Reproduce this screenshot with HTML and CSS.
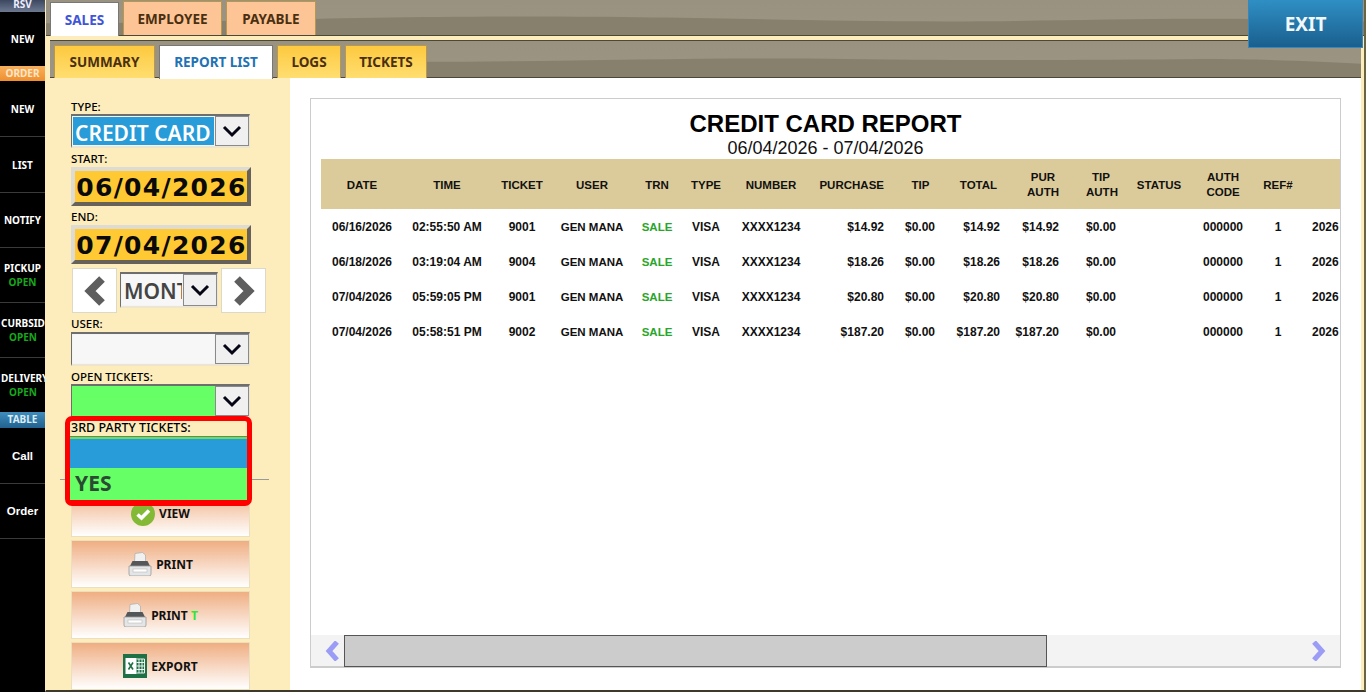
FILE: index.html
```html
<!DOCTYPE html>
<html lang="en">
<head>
    <meta charset="UTF-8">
    <meta name="viewport" content="width=device-width, initial-scale=1.0">
    <title>Credit Card Report</title>
    <link rel="stylesheet" href="styles.css">
</head>
<body>
    <nav class="side">
        <div class="side-head head-rsv">RSV</div>
        <div class="side-item side-short">NEW</div>
        <div class="side-head head-order">ORDER</div>
        <div class="side-item side-tall">NEW</div>
        <div class="side-item side-tall">LIST</div>
        <div class="side-item">NOTIFY</div>
        <div class="side-item">PICKUP<span class="side-open">OPEN</span></div>
        <div class="side-item side-clip">CURBSIDE<span class="side-open">OPEN</span></div>
        <div class="side-item side-clip side-last">DELIVERY<span class="side-open">OPEN</span></div>
        <div class="side-head head-table">TABLE</div>
        <div class="side-item side-plain">Call</div>
        <div class="side-item side-plain">Order</div>
    </nav>

    <div class="main">
        <div class="strip strip-top">
            <svg class="wave" viewBox="0 0 1320 36" preserveAspectRatio="none"><path d="M0 24 C150 24 280 17 480 17 C650 17 760 22 900 22 C1040 22 1130 16 1320 22 V36 H0 Z"/></svg>
            <a class="tab tab-peach tab-on tab-sales">SALES</a>
            <a class="tab tab-peach tab-employee">EMPLOYEE</a>
            <a class="tab tab-peach tab-payable">PAYABLE</a>
        </div>
        <a class="exit">EXIT</a>

        <div class="strip strip-sub">
            <svg class="wave" viewBox="0 0 1320 38" preserveAspectRatio="none"><path d="M370 22 C520 22 650 17 800 19 C950 21 1050 20 1160 19 C1230 19 1280 22 1320 24 V38 H370 Z"/></svg>
            <a class="tab tab-yellow tab-summary">SUMMARY</a>
            <a class="tab tab-yellow tab-on tab-report">REPORT LIST</a>
            <a class="tab tab-yellow tab-logs">LOGS</a>
            <a class="tab tab-yellow tab-tickets">TICKETS</a>
        </div>

        <div class="content">
            <aside class="filters">
                <label class="lbl">TYPE:</label>
                <div class="combo">
                    <div class="combo-value value-blue">CREDIT CARD</div>
                    <div class="combo-arrow"><svg viewBox="0 0 20 14"><path d="M2 3 L10 11 L18 3"/></svg></div>
                </div>
                <label class="lbl lbl-tall">START:</label>
                <div class="date">06/04/2026</div>
                <label class="lbl lbl-tall">END:</label>
                <div class="date">07/04/2026</div>

                <div class="range">
                    <button class="range-btn"><svg viewBox="0 0 26 34"><path d="M20 5 L8 17 L20 29"/></svg></button>
                    <div class="combo combo-range">
                        <div class="combo-value value-gray">MONTH</div>
                        <div class="combo-arrow"><svg viewBox="0 0 20 14"><path d="M2 3 L10 11 L18 3"/></svg></div>
                    </div>
                    <button class="range-btn"><svg viewBox="0 0 26 34"><path d="M6 5 L18 17 L6 29"/></svg></button>
                </div>

                <label class="lbl lbl-tall">USER:</label>
                <div class="combo">
                    <div class="combo-value"></div>
                    <div class="combo-arrow"><svg viewBox="0 0 20 14"><path d="M2 3 L10 11 L18 3"/></svg></div>
                </div>
                <label class="lbl lbl-gap">OPEN TICKETS:</label>
                <div class="combo">
                    <div class="combo-value value-green"></div>
                    <div class="combo-arrow"><svg viewBox="0 0 20 14"><path d="M2 3 L10 11 L18 3"/></svg></div>
                </div>

                <div class="spacer"></div>
                <hr class="rule">

                <div class="actions">
                    <button class="act act-view">
                        <svg class="act-icon" viewBox="0 0 24 24"><circle cx="12" cy="12" r="12" fill="#84b935"/><path d="M6.5 12.5 L10.5 16 L18 8.5" fill="none" stroke="#fff" stroke-width="3.6"/></svg>
                        VIEW
                    </button>
                    <button class="act">
                        <svg class="act-icon" viewBox="0 0 24 24"><use href="#printer"/></svg>
                        PRINT
                    </button>
                    <button class="act">
                        <svg class="act-icon" viewBox="0 0 24 24"><use href="#printer"/></svg>
                        <span>PRINT <em class="act-t">T</em></span>
                    </button>
                    <button class="act">
                        <svg class="act-icon" viewBox="0 0 24 24">
                            <rect width="24" height="24" fill="#1e7145"/>
                            <rect x="2.5" y="4" width="11" height="16" fill="#fff"/>
                            <path d="M5.5 8.5 L10 15.5 M10 8.5 L5.5 15.5" stroke="#1e7145" stroke-width="1.6"/>
                            <path d="M13.5 5 H21.5 V19 H13.5 M16 5 V19 M19 5 V19 M13.5 8.5 H21.5 M13.5 12 H21.5 M13.5 15.5 H21.5" fill="none" stroke="#fff" stroke-width=".9"/>
                        </svg>
                        EXPORT
                    </button>
                </div>
            </aside>

            <section class="report">
                <h2 class="report-title">CREDIT CARD REPORT</h2>
                <p class="report-range">06/04/2026 - 07/04/2026</p>
                <div class="report-table">
                    <table>
                        <colgroup>
                            <col class="c-date"><col class="c-time"><col class="c-ticket"><col class="c-user"><col class="c-trn"><col class="c-type"><col class="c-number"><col class="c-purchase"><col class="c-tip"><col class="c-total"><col class="c-purauth"><col class="c-tipauth"><col class="c-status"><col class="c-code"><col class="c-ref"><col class="c-batch">
                        </colgroup>
                        <thead>
                            <tr>
                                <th>DATE</th><th>TIME</th><th>TICKET</th><th>USER</th><th>TRN</th><th>TYPE</th><th>NUMBER</th>
                                <th class="num">PURCHASE</th><th class="mid">TIP</th><th class="mid">TOTAL</th><th class="mid mid-auth">PUR<br>AUTH</th><th class="mid mid-auth">TIP<br>AUTH</th>
                                <th>STATUS</th><th>AUTH<br>CODE</th><th>REF#</th><th></th>
                            </tr>
                        </thead>
                        <tbody>
                            <tr><td>06/16/2026</td><td>02:55:50 AM</td><td>9001</td><td class="narrow">GEN MANA</td><td class="sale">SALE</td><td>VISA</td><td>XXXX1234</td><td class="num">$14.92</td><td class="num">$0.00</td><td class="num">$14.92</td><td class="num">$14.92</td><td class="num">$0.00</td><td></td><td>000000</td><td>1</td><td class="batch">2026</td></tr>
                            <tr><td>06/18/2026</td><td>03:19:04 AM</td><td>9004</td><td class="narrow">GEN MANA</td><td class="sale">SALE</td><td>VISA</td><td>XXXX1234</td><td class="num">$18.26</td><td class="num">$0.00</td><td class="num">$18.26</td><td class="num">$18.26</td><td class="num">$0.00</td><td></td><td>000000</td><td>1</td><td class="batch">2026</td></tr>
                            <tr><td>07/04/2026</td><td>05:59:05 PM</td><td>9001</td><td class="narrow">GEN MANA</td><td class="sale">SALE</td><td>VISA</td><td>XXXX1234</td><td class="num">$20.80</td><td class="num">$0.00</td><td class="num">$20.80</td><td class="num">$20.80</td><td class="num">$0.00</td><td></td><td>000000</td><td>1</td><td class="batch">2026</td></tr>
                            <tr><td>07/04/2026</td><td>05:58:51 PM</td><td>9002</td><td class="narrow">GEN MANA</td><td class="sale">SALE</td><td>VISA</td><td>XXXX1234</td><td class="num">$187.20</td><td class="num">$0.00</td><td class="num">$187.20</td><td class="num">$187.20</td><td class="num">$0.00</td><td></td><td>000000</td><td>1</td><td class="batch">2026</td></tr>
                        </tbody>
                    </table>
                </div>
                <div class="hscroll">
                    <div class="hscroll-end"><svg viewBox="0 0 17 20"><path d="M14 1 L6 10 L14 19"/></svg></div>
                    <div class="hscroll-thumb"></div>
                    <div class="hscroll-rest"><svg viewBox="0 0 17 20"><path d="M3 1 L11 10 L3 19"/></svg></div>
                </div>
            </section>
        </div>

        <!-- highlighted dropdown, open over the filters -->
        <div class="callout">
            <div class="callout-label">3RD PARTY TICKETS:</div>
            <div class="callout-opt opt-blue"></div>
            <div class="callout-opt opt-green">YES</div>
        </div>
    </div>

    <svg class="defs" width="0" height="0">
        <symbol id="printer" viewBox="0 0 24 24">
            <path d="M6.5 10 L7 1.5 L14.5 0.5 L17.5 3 V10 Z" fill="#f1f1f1" stroke="#aaa" stroke-width=".7"/>
            <path d="M4.5 9 H19.5 L22 14 H2 Z" fill="#54575a"/>
            <path d="M1 14 H23 V22 Q23 24 21 24 H3 Q1 24 1 22 Z" fill="#e3e5e6" stroke="#999" stroke-width=".8"/>
            <rect x="5" y="17" width="14" height="3" fill="#fff" stroke="#bbb" stroke-width=".6"/>
        </symbol>
    </svg>
</body>
</html>
```

FILE: styles.css
```css
* {
    margin: 0;
    padding: 0;
    box-sizing: border-box;
}
html, body {
    height: 692px;
    overflow: hidden;
}
body {
    display: flex;
    background: #000;
    font-family: 'Noto Sans', sans-serif;
    color: #111;
}
.defs {
    position: absolute;
}

/* left black bar */
.side {
    width: 45px;
    flex: 0 0 45px;
    background: #000;
    color: #fff;
    font-size: 10px;
    font-weight: 700;
    overflow: hidden;
}
.side-head {
    height: 16px;
    line-height: 15px;
    text-align: center;
    color: #eef;
}
.head-rsv {
    height: 12px;
    line-height: 9px;
    background: linear-gradient(#3c4760, #6d7891);
}
.head-order {
    height: 15px;
    background: linear-gradient(#f8b05c, #ef8f2e);
    color: #fde6c8;
}
.head-table {
    margin-bottom: 1px;
    background: linear-gradient(#3f8dbd, #21618f);
    color: #dcecf6;
}
.side-item {
    height: 55px;
    border-bottom: 1px solid #3a3a3a;
    display: flex;
    flex-direction: column;
    align-items: center;
    justify-content: center;
    line-height: 14px;
    white-space: nowrap;
    overflow: hidden;
}
.side-short {
    height: 54px;
    border-bottom: none;
}
.side-tall {
    height: 56px;
}
.side-last {
    height: 54px;
    border-bottom: none;
}
.side-clip {
    align-items: flex-start;
    padding-left: 1px;
}
.side-clip .side-open {
    align-self: center;
}
.side-plain {
    font-family: 'Liberation Sans', sans-serif;
    font-size: 11.5px;
}
.side-open {
    color: #17a81c;
}

/* main area */
.main {
    flex: 1;
    position: relative;
    background: #fdedbd;
    border-left: 1px solid #fdedbd;
    border-right: 2px solid #6b6440;
    border-bottom: 2px solid #3d3a2c;
    display: flex;
    flex-direction: column;
}
.strip {
    position: relative;
    display: flex;
    align-items: flex-end;
    background: linear-gradient(#9a9281, #9c9583);
    border-bottom: 1px solid #4c4837;
}
.strip-top {
    height: 36px;
    padding-left: 4px;
    gap: 4px;
}
.strip-sub {
    height: 38px;
    margin: 4px 3px 0 4px;
    padding-left: 4px;
    gap: 4px;
    border-top: 1px solid #4c4837;
}
.wave {
    position: absolute;
    left: 0;
    top: 0;
    width: 100%;
    height: 100%;
}
.wave path {
    fill: #87806d;
}
.tab {
    position: relative;
    height: 34px;
    display: flex;
    align-items: center;
    justify-content: center;
    font-size: 13.5px;
    font-weight: 700;
    border: 1px solid #b8974e;
    border-bottom: none;
}
.tab-peach {
    background: #fdc596;
    color: #4a2f10;
}
.tab-yellow {
    height: 33px;
    margin-bottom: -1px;
    background: linear-gradient(#fdc93f, #ffde70);
    color: #4a2f10;
}
.tab-sales { width: 69px; }
.tab-employee { width: 99px; }
.tab-payable { width: 90px; }
.tab-summary { width: 101px; }
.tab-report { width: 114px; }
.tab-logs { width: 64px; }
.tab-tickets { width: 82px; }
.tab-on {
    background: #fff;
    border-color: #777;
    height: 34px;
    margin-bottom: -1px;
}
.tab-report.tab-on {
    margin-bottom: -2px;
    padding-bottom: 2px;
    color: #1f72b5;
}
.tab-sales.tab-on { color: #3f55d8; }
.exit {
    position: absolute;
    z-index: 2;
    right: 1px;
    top: 0;
    width: 115px;
    height: 48px;
    display: flex;
    align-items: center;
    justify-content: center;
    background: linear-gradient(#2f8fc4, #1a5f8e);
    border: 1px solid #3a86ba;
    border-top: none;
    color: #f2f7fb;
    font-size: 19px;
    font-weight: 700;
}

.content {
    flex: 1;
    display: flex;
    min-height: 0;
}

/* filter column */
.filters {
    width: 244px;
    flex: 0 0 244px;
    padding: 22px 0 0 25px;
    display: flex;
    flex-direction: column;
    overflow: hidden;
}
.lbl {
    height: 14px;
    line-height: 13px;
    font-size: 11.5px;
    font-weight: 500;
    color: #000;
}
.lbl-tall {
    height: 15px;
    margin-top: 4px;
}
.lbl-gap {
    margin-top: 4px;
}
.combo {
    width: 179px;
    height: 34px;
    display: flex;
    border-top: 2px solid #6e6e6e;
    border-left: 1px solid #6e6e6e;
    border-right: 1px solid #ece6d0;
    border-bottom: 2px solid #ece6d0;
}
.combo-value {
    flex: 1;
    min-width: 0;
    background: #f7f7f7;
    overflow: hidden;
    white-space: nowrap;
    font-size: 21px;
    font-weight: 600;
    line-height: 32px;
    padding-left: 2px;
    border: 1px solid #f4f4f4;
}
.value-blue {
    background: #289cd8;
    color: #fff;
}
.value-green {
    background: #66ff66;
    border-color: #66ff66;
}
.value-gray {
    color: #444;
    background: #f7f7f7;
}
.combo-arrow {
    width: 34px;
    flex: 0 0 34px;
    background: #f0f0f0;
    border: 1px solid #8a8a8a;
    display: flex;
    align-items: center;
    justify-content: center;
}
.combo-arrow svg {
    width: 20px;
    height: 14px;
}
.combo-arrow path {
    fill: none;
    stroke: #050515;
    stroke-width: 3;
}
.date {
    width: 180px;
    height: 39px;
    background: #ffc933;
    border: 4px solid;
    border-color: #dedcd2 #66625a #66625a #dedcd2;
    padding-left: 1px;
    font-family: 'DejaVu Sans', sans-serif;
    font-weight: 700;
    font-size: 25px;
    letter-spacing: 1.3px;
    line-height: 33px;
    text-align: center;
    color: #0a0a0a;
    white-space: nowrap;
    overflow: hidden;
}
.range {
    display: flex;
    align-items: center;
    gap: 3px;
    margin: 4px 0 0 1px;
    height: 45px;
}
.range-btn {
    width: 45px;
    height: 45px;
    background: #fff;
    border: 1px solid #ddd8c8;
    display: flex;
    align-items: center;
    justify-content: center;
}
.range-btn svg {
    width: 26px;
    height: 34px;
}
.range-btn path {
    fill: none;
    stroke: #5e5e5e;
    stroke-width: 8;
}
.combo-range {
    width: 98px;
    height: 36px;
    margin-top: -2px;
}
.spacer {
    height: 61px;
    flex: 0 0 61px;
}
.rule {
    width: 209px;
    margin-left: -11px;
    border: none;
    border-top: 1px solid #999;
    flex: 0 0 1px;
}
.actions {
    margin-top: 10px;
    display: flex;
    flex-direction: column;
    gap: 3px;
}
.act {
    width: 179px;
    height: 48px;
    flex: 0 0 48px;
    display: flex;
    align-items: center;
    justify-content: center;
    gap: 4px;
    font-family: 'Noto Sans', sans-serif;
    font-size: 12px;
    font-weight: 700;
    color: #111;
    background: linear-gradient(#efae82, #fff);
    border: 1px solid #ecdfbd;
}
.act-view {
    height: 47px;
    flex-basis: 47px;
}
.act-icon {
    width: 24px;
    height: 24px;
}
.act-t {
    font-style: normal;
    color: #2fe82f;
}

/* report panel */
.report {
    flex: 1;
    margin-right: 3px;
    background: #fff;
    padding: 20px 20px 22px 20px;
    display: flex;
    flex-direction: column;
    min-width: 0;
    font-family: 'Liberation Sans', sans-serif;
}
.report-title {
    font-size: 24px;
    line-height: 28px;
    text-align: center;
    color: #000;
    border: 1px solid #ccc;
    border-bottom: none;
    padding-top: 11px;
}
.report-range {
    font-size: 18px;
    line-height: 21px;
    text-align: center;
    color: #111;
    border-left: 1px solid #ccc;
    border-right: 1px solid #ccc;
}
.report-table {
    flex: 1;
    border-left: 1px solid #ccc;
    border-right: 1px solid #ccc;
    padding-left: 10px;
    overflow: hidden;
}
table {
    width: 1019px;
    table-layout: fixed;
    border-collapse: collapse;
}
.c-date { width: 82px; }
.c-time { width: 88px; }
.c-ticket { width: 62px; }
.c-user { width: 78px; }
.c-trn { width: 52px; }
.c-type { width: 46px; }
.c-number { width: 84px; }
.c-purchase { width: 77px; }
.c-tip { width: 51px; }
.c-total { width: 65px; }
.c-purauth { width: 59px; }
.c-tipauth { width: 57px; }
.c-status { width: 74px; }
.c-code { width: 54px; }
.c-ref { width: 56px; }
.c-batch { width: 34px; }
th, td {
    font-size: 12px;
    font-weight: 700;
    color: #111;
    text-align: center;
    white-space: nowrap;
    line-height: 15px;
}
th {
    height: 50px;
    padding-top: 2px;
    font-size: 11.5px;
    background: #dccb9a;
}
td {
    height: 35px;
    padding-top: 2px;
}
.num {
    text-align: right;
    padding-right: 6px;
}
th.mid {
    padding-left: 16px;
    padding-right: 6px;
}
th.mid-auth {
    padding-left: 21px;
}
.narrow {
    font-size: 11.5px;
}
.sale {
    font-size: 11.5px;
    color: #2aa52a;
}
.batch {
    text-align: left;
    padding-left: 6px;
}

/* fake horizontal scrollbar */
.hscroll {
    height: 33px;
    display: flex;
    background: #f3f3f3;
    border-left: 1px solid #ccc;
    border-right: 1px solid #ccc;
    border-bottom: 2px solid #ccc;
}
.hscroll-end {
    width: 33px;
    display: flex;
    align-items: center;
    justify-content: flex-end;
    padding-right: 4px;
}
.hscroll-thumb {
    width: 703px;
    background: #ccc;
    border: 1px solid #555;
    margin-bottom: -1px;
}
.hscroll-rest {
    flex: 1;
    display: flex;
    align-items: center;
    justify-content: flex-end;
    padding-right: 12px;
}
.hscroll svg {
    width: 17px;
    height: 20px;
}
.hscroll path {
    fill: none;
    stroke: #9a9cf5;
    stroke-width: 5;
}

/* red highlight box */
.callout {
    position: absolute;
    left: 19px;
    top: 416px;
    width: 187px;
    height: 90px;
    border: 5px solid #f00;
    border-bottom-width: 6px;
    border-radius: 7px;
    background: #fdedbd;
}
.callout-label {
    height: 16px;
    line-height: 14px;
    font-size: 12.5px;
    font-weight: 500;
    padding-left: 1px;
    color: #000;
    border-bottom: 1px solid #6c8a4c;
}
.callout-opt {
    background: #66ff66;
}
.opt-blue {
    height: 31px;
    background: #289cd8;
    border-top: 2px solid #66dd66;
}
.opt-green {
    height: 32px;
    font-size: 21px;
    font-weight: 700;
    line-height: 31px;
    padding-left: 5px;
    color: #2a4a32;
}
```
